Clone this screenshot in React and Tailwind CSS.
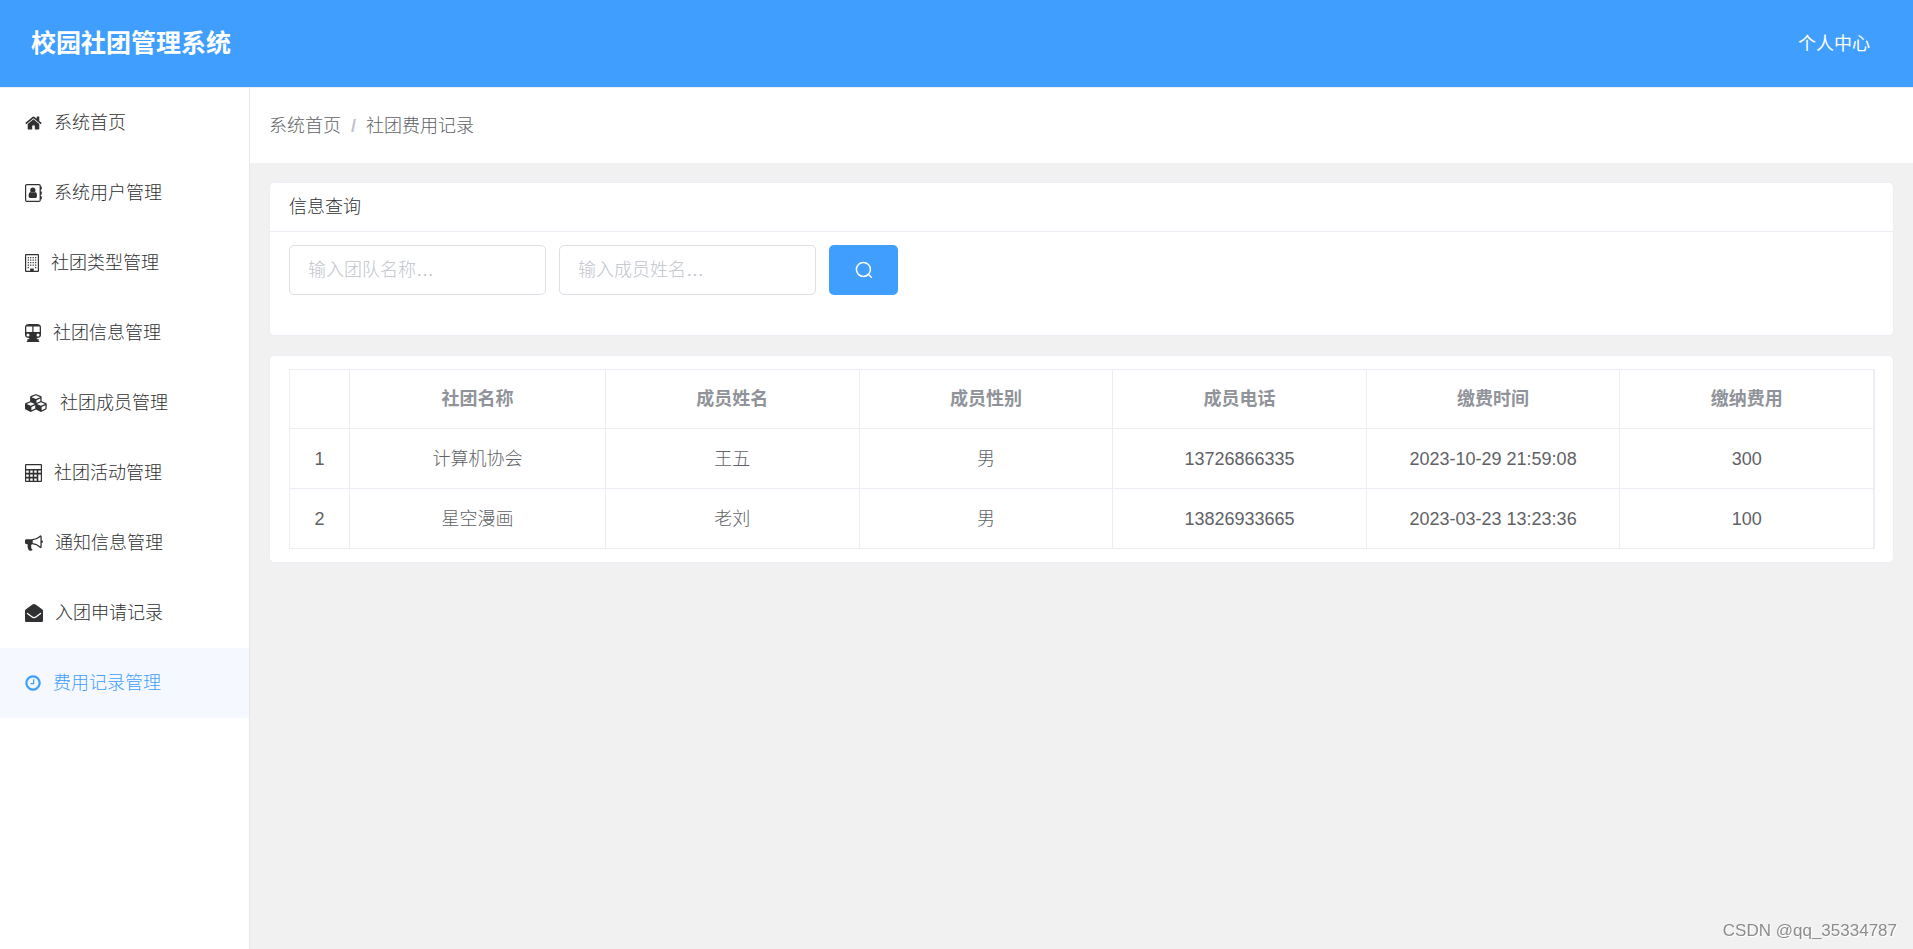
import React, { useState } from 'react';

const HomeIcon = () => (
  <svg viewBox="64 0 1664 1792" className="h-[18px] w-[17px] shrink-0" fill="currentColor" aria-hidden="true">
    <path d="M1472 992v480q0 26-19 45t-45 19h-384v-384h-256v384h-384q-26 0-45-19t-19-45v-480q0-1 .5-3t.5-3l575-474 575 474q1 2 1 6zm223-69l-62 74q-8 9-21 11h-3q-13 0-21-7l-692-577-692 577q-12 8-24 7-13-2-21-11l-62-74q-8-10-7-23.5t11-21.5l719-599q32-26 76-26t76 26l244 204v-195q0-14 9-23t23-9h192q14 0 23 9t9 23v408l219 182q10 8 11 21.5t-7 23.5z" />
  </svg>
);

const AddressBookIcon = () => (
  <svg viewBox="0 0 17 18" className="h-[18px] w-[17px] shrink-0" fill="currentColor" aria-hidden="true">
    <rect x="0.6" y="0.6" width="14.6" height="16.8" rx="1.2" fill="none" stroke="currentColor" strokeWidth="1.2" />
    <path d="M15 2.6h1.8v3H15zM15 7.4h1.8v3H15zM15 12.2h1.8v3H15z" />
    <circle cx="7.8" cy="6.2" r="2.6" />
    <path d="M5.4 8c-1.300.4-1.800 1.800-1.800 3.900 0 1.200.6 2 1.600 2h5.200c1 0 1.600-.8 1.600-2 0-2.100-.5-3.500-1.800-3.900-1.200 1.200-3.600 1.200-4.800 0z" />
  </svg>
);

const BuildingIcon = () => (
  <svg viewBox="0 0 14 18" className="h-[18px] w-[14px] shrink-0" fill="currentColor" aria-hidden="true">
    <rect x="0.6" y="0.6" width="12.8" height="16.8" rx="0.5" fill="none" stroke="currentColor" strokeWidth="1.2" />
    {[3, 5.5, 8, 10.5].map(y => (
      <path key={y} d={`M2.7 ${y}h1.2v1.2h-1.2zM5.1 ${y}h1.2v1.2h-1.2zM7.6 ${y}h1.2v1.2h-1.2zM10.1 ${y}h1.2v1.2h-1.2z`} />
    ))}
    <path d="M2.7 13h1.2v1.2h-1.2zM10.1 13h1.2v1.2h-1.2zM5.1 14.500h3.7v2.900H5.100z" />
  </svg>
);

const TrainIcon = () => (
  <svg viewBox="0 0 16 18" className="h-[18px] w-4 shrink-0" fill="currentColor" aria-hidden="true">
    <path
      fillRule="evenodd"
      d="M4 0h8c2.200 0 4 1.300 4 3v8c0 1.700-1.700 3-3.900 3h-.6l1 1.200h1.300v1h-.5l1.400 1.800H1.300l1.400-1.800h-.5v-1h1.300l1-1.200h-.6C1.700 14 0 12.700 0 11V3c0-1.700 1.800-3 4-3zM1.300 2.500v5.600h6V2.500zM8.500 2.500v5.600h6.200V2.500zM3 9.500a1.500 1.500 0 1 0 0 3 1.500 1.500 0 0 0 0-3zM13 9.500a1.500 1.500 0 1 0 0 3 1.500 1.500 0 0 0 0-3z"
    />
  </svg>
);

const CubesIcon = () => (
  <svg viewBox="0 0 2304 1792" className="h-[18px] w-[23px] shrink-0" fill="currentColor" aria-hidden="true">
    <path d="M640 1632l384-192v-314l-384 164v342zm-64-454l404-173-404-173-404 173zm1088 454l384-192v-314l-384 164v342zm-64-454l404-173-404-173-404 173zm-448-293l384-165v-266l-384 164v267zm-64-379l441-189-441-189-441 189zm1088 518v416q0 36-19 67t-52 47l-448 224q-25 14-57 14t-57-14l-448-224q-4-2-7-4-2 2-7 4l-448 224q-25 14-57 14t-57-14l-448-224q-33-16-52-47t-19-67v-416q0-38 21.5-70t56.5-48l434-186v-400q0-38 21.5-70t56.5-48l448-192q23-10 50-10t50 10l448 192q35 16 56.5 48t21.5 70v400l434 186q36 16 57 48t21 70z" />
  </svg>
);

const CalculatorIcon = () => (
  <svg viewBox="0 0 17 18" className="h-[18px] w-[17px] shrink-0" fill="currentColor" aria-hidden="true">
    <path
      fillRule="evenodd"
      d="M1 0h15a1 1 0 0 1 1 1v16a1 1 0 0 1-1 1H1a1 1 0 0 1-1-1V1a1 1 0 0 1 1-1zM1.200 1.200v3.800h14.600V1.200zM1.200 6.500v2.300h2.500v-2.300zM5.200 6.500v2.300h2.500v-2.300zM9.200 6.500v2.300h2.500v-2.300zM13.300 6.500v2.300h2.500v-2.300zM1.200 10.400v2.300h2.500v-2.300zM5.200 10.400v2.300h2.500v-2.300zM9.200 10.400v2.300h2.500v-2.300zM13.300 10.400v6.300h2.500v-6.300zM1.200 14.400v2.300h2.500v-2.300zM5.200 14.400v2.300h2.500v-2.300zM9.200 14.400v2.300h2.500v-2.300z"
    />
  </svg>
);

const BullhornIcon = () => (
  <svg viewBox="0 0 1792 1792" className="size-[18px] shrink-0" fill="currentColor" aria-hidden="true">
    <path d="M1664 640q53 0 90.5 37.5t37.5 90.5-37.5 90.5-90.5 37.5v384q0 52-38 90t-90 38q-417-347-812-380-58 19-91 66t-31 100.5 40 92.5q-20 33-23 65.5t6 58 33.5 55 48 50 61.5 50.5q-29 58-111.5 83t-168.5 11.5-132-55.5q-7-23-29.5-87.5t-32-94.5-23-89-15-101 3.5-98.5 22-110.5h-122q-66 0-113-47t-47-113v-192q0-66 47-113t113-47h480q435 0 896-384 52 0 90 38t38 90v384zm-128 604v-954q-394 302-768 343v270q377 42 768 341z" />
  </svg>
);

const EnvelopeOpenIcon = () => (
  <svg viewBox="0 0 18 18" className="size-[18px] shrink-0" fill="currentColor" aria-hidden="true">
    <path d="M9 0c.6 0 1.200.3 1.900.8l6.500 4.700c.4.3.6.7.6 1.200v9.700c0 .9-.7 1.600-1.600 1.600H1.600C.7 18 0 17.300 0 16.400V6.700c0-.5.2-.9.6-1.200L7.100.8C7.800.3 8.400 0 9 0z" />
    <path d="M2.500 9.500l4.300 3.300c1.500 1.100 2.900 1.100 4.400 0l4.300-3.300" fill="none" stroke="#fff" strokeWidth="1.300" strokeLinecap="round" />
  </svg>
);

const ClockIcon = () => (
  <svg viewBox="128 0 1536 1792" className="h-[18px] w-4 shrink-0" fill="currentColor" aria-hidden="true">
    <path d="M1024 544v448q0 14-9 23t-23 9h-320q-14 0-23-9t-9-23v-64q0-14 9-23t23-9h224v-352q0-14 9-23t23-9h64q14 0 23 9t9 23zm416 352q0-148-73-273t-198-198-273-73-273 73-198 198-73 273 73 273 198 198 273 73 273-73 198-198 73-273zm224 0q0 209-103 385.500t-279.500 279.500-385.500 103-385.500-103-279.500-279.500-103-385.500 103-385.500 279.500-279.500 385.500-103 385.500 103 279.500 279.500 103 385.500z" />
  </svg>
);

const SearchIcon = () => (
  <svg viewBox="0 0 18 18" className="size-[18px]" fill="none" stroke="currentColor" strokeWidth="1.5" aria-hidden="true">
    <circle cx="8.400" cy="8.400" r="7" />
    <path d="M13.500 13.500l2.800 2.800" strokeLinecap="round" />
  </svg>
);

const menuItems = [
  { name: '系统首页', icon: HomeIcon },
  { name: '系统用户管理', icon: AddressBookIcon },
  { name: '社团类型管理', icon: BuildingIcon },
  { name: '社团信息管理', icon: TrainIcon },
  { name: '社团成员管理', icon: CubesIcon },
  { name: '社团活动管理', icon: CalculatorIcon },
  { name: '通知信息管理', icon: BullhornIcon },
  { name: '入团申请记录', icon: EnvelopeOpenIcon },
  { name: '费用记录管理', icon: ClockIcon },
];

const columns = ['社团名称', '成员姓名', '成员性别', '成员电话', '缴费时间', '缴纳费用'];

const payLogs = [
  ['计算机协会', '王五', '男', '13726866335', '2023-10-29 21:59:08', '300'],
  ['星空漫画', '老刘', '男', '13826933665', '2023-03-23 13:23:36', '100'],
];

const App = () => {
  const [active, setActive] = useState('费用记录管理');
  const [teamName, setTeamName] = useState('');
  const [userName, setUserName] = useState('');

  const inputClass =
    'h-[50px] w-[257px] rounded-[5px] border border-[#dcdfe6] bg-white px-[18px] text-[#606266] outline-none placeholder:text-[#c0c4cc] focus:border-[#409eff]';

  return (
    <div className="flex min-h-screen flex-col bg-[#f1f1f1] font-['Liberation_Sans','Noto_Sans_CJK_SC',sans-serif] text-lg text-[#303133]">
      <header className="flex h-[88px] items-center justify-between border-b border-[#eeeeee] bg-[#409eff] pr-[43px] pl-[31px] text-white">
        <h1 className="text-[25px] font-bold">校园社团管理系统</h1>
        <a href="#center">个人中心</a>
      </header>

      <div className="flex flex-1 font-light">
        {/* Sidebar */}
        <nav className="w-[250px] shrink-0 border-r border-[#e6e6e6] bg-white">
          {menuItems.map(({ name, icon: Icon }) => (
            <a
              key={name}
              href="#menu"
              onClick={() => setActive(name)}
              className={`flex h-[70px] items-center gap-3 pl-[25px] ${
                active === name ? 'bg-[#f5f9ff] text-[#409eff]' : 'text-[#303133]'
              }`}
            >
              <Icon />
              <span>{name}</span>
            </a>
          ))}
        </nav>

        <main className="min-w-0 flex-1">
          <div className="flex h-[75px] items-center gap-2.5 bg-white px-[19px] text-[#606266]">
            <a href="#home">系统首页</a>
            <span className="font-bold text-[#c0c4cc]">/</span>
            <span>社团费用记录</span>
          </div>

          <div className="flex flex-col gap-[19px] p-[19px]">
            {/* Search */}
            <section className="rounded-[5px] border border-[#ebeef5] bg-white">
              <h2 className="flex h-[49px] items-center border-b border-[#ebeef5] px-[19px] font-light">信息查询</h2>
              <form className="flex gap-[13px] px-[19px] pt-[13px] pb-10" onSubmit={e => e.preventDefault()}>
                <input
                  type="text"
                  aria-label="团队名称"
                  placeholder="输入团队名称…"
                  value={teamName}
                  onChange={e => setTeamName(e.target.value)}
                  className={inputClass}
                />
                <input
                  type="text"
                  aria-label="成员姓名"
                  placeholder="输入成员姓名…"
                  value={userName}
                  onChange={e => setUserName(e.target.value)}
                  className={inputClass}
                />
                <button
                  type="submit"
                  aria-label="查询"
                  className="flex h-[50px] w-[69px] items-center justify-center rounded-[5px] bg-[#409eff] text-white"
                >
                  <SearchIcon />
                </button>
              </form>
            </section>

            {/* Fee records */}
            <section className="rounded-[5px] border border-[#ebeef5] bg-white py-[13px] pr-[18px] pl-[19px]">
              <table className="w-full table-fixed border-separate border-spacing-0 border-t border-r border-l border-[#ebeef5] text-center text-[#606266]">
                <colgroup>
                  <col className="w-[60px]" />
                  <col className="w-[256px]" />
                  <col span={5} />
                </colgroup>
                <thead>
                  <tr className="h-[59px] text-[#909399]">
                    <th className="border-r border-b border-[#ebeef5]" />
                    {columns.map(col => (
                      <th key={col} className="border-r border-b border-[#ebeef5] font-bold">{col}</th>
                    ))}
                  </tr>
                </thead>
                <tbody>
                  {payLogs.map((row, index) => (
                    <tr key={index} className="h-[60px]">
                      <td className="border-r border-b border-[#ebeef5]">{index + 1}</td>
                      {row.map((cell, i) => (
                        <td key={i} className="border-r border-b border-[#ebeef5]">{cell}</td>
                      ))}
                    </tr>
                  ))}
                </tbody>
              </table>
            </section>
          </div>
        </main>
      </div>

      <div className="fixed right-4 bottom-1.5 text-[17px] leading-6 text-[#8c8c8c] [text-shadow:1px_1px_0_#fff]">
        CSDN @qq_35334787
      </div>
    </div>
  );
};

export default App;
